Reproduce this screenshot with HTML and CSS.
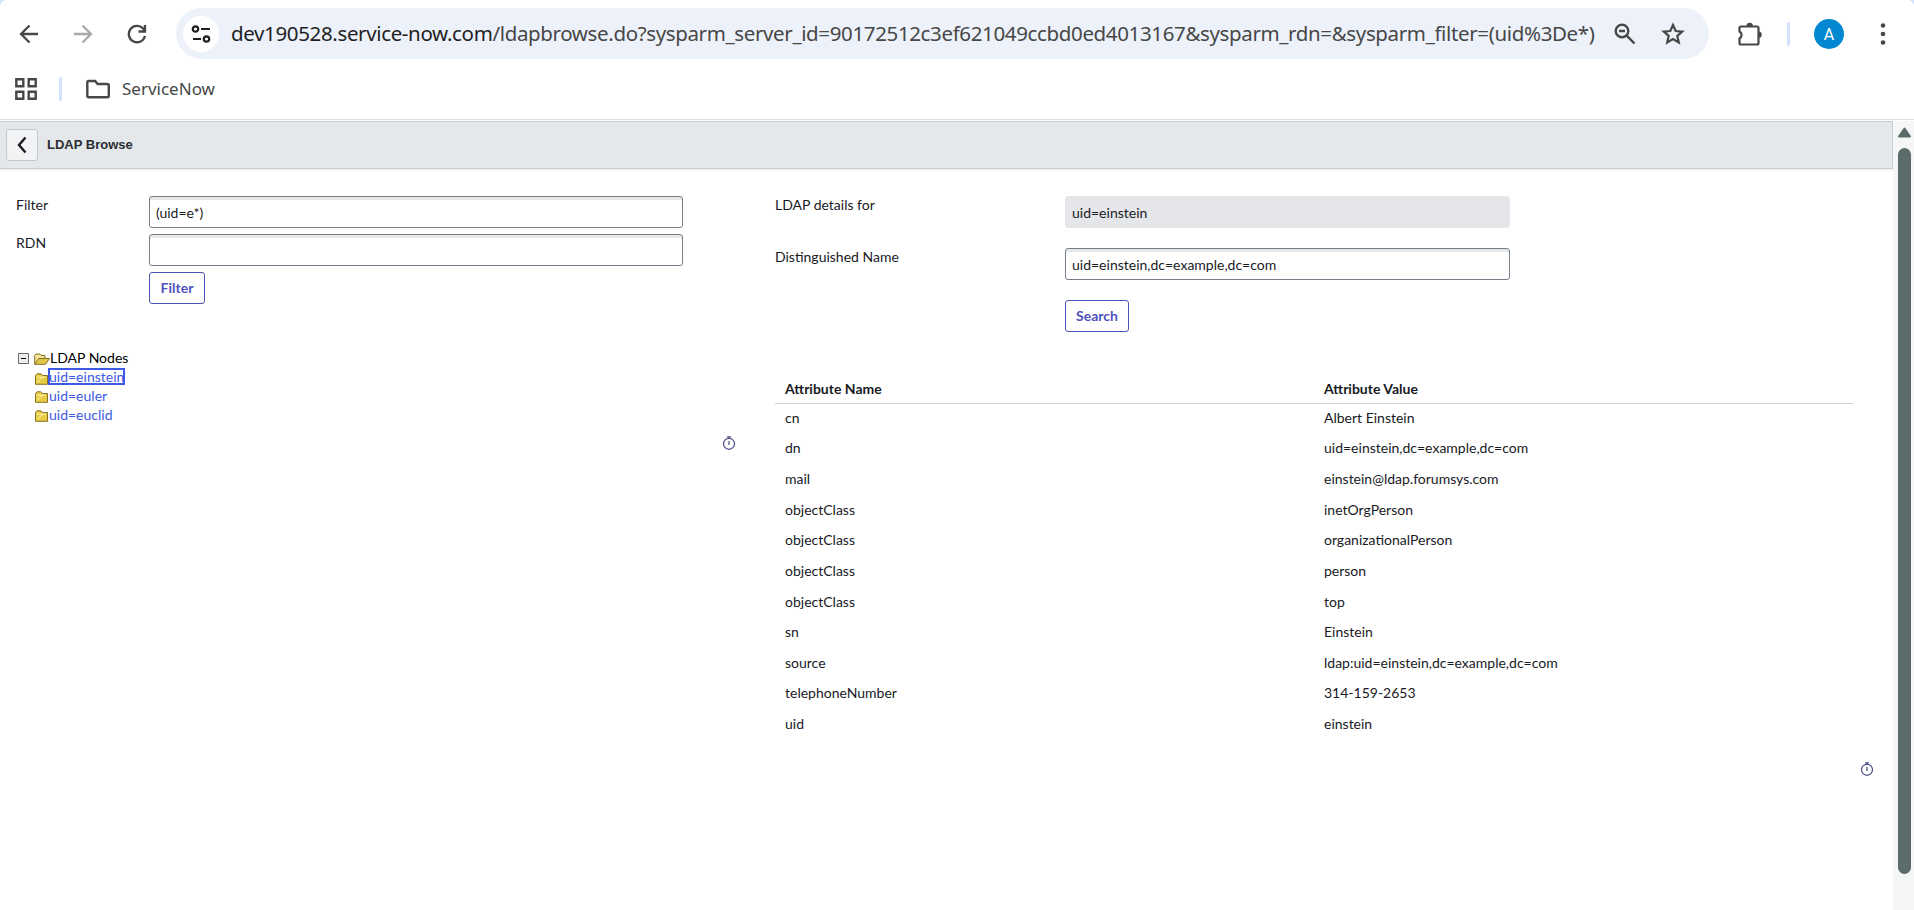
FILE: index.html
```html
<!DOCTYPE html>
<html lang="en">
<head>
<meta charset="utf-8">
<title>LDAP Browse</title>
<link rel="stylesheet" href="styles.css">
</head>
<body>
<div class="browser">
  <div class="toolbar">
    <svg class="nav" width="20" height="20" viewBox="0 0 20 20"><path d="M19 10H2.500M10.500 1.500L2 10l8.500 8.500"/></svg>
    <svg class="nav forward" width="20" height="20" viewBox="0 0 20 20"><path d="M1 10h16.500M9.500 1.500L18 10l-8.500 8.500"/></svg>
    <svg class="nav" width="20" height="20" viewBox="0 0 20 20"><path d="M18 12A8.200 8.200 0 1 1 16 4.400L18 6.500M18 1v6.500h-6.500"/></svg>
    <div class="address">
      <div class="site">
        <svg width="20" height="18" viewBox="0 0 20 18"><circle cx="4.500" cy="4" r="2.700"/><circle cx="15.500" cy="14" r="2.700"/><path d="M10 4h9M2 14h8"/></svg>
      </div>
      <div class="url"><span class="host">dev190528.service-now.com</span>/ldapbrowse.do?sysparm_server_id=90172512c3ef621049ccbd0ed4013167&amp;sysparm_rdn=&amp;sysparm_filter=(uid%3De*)</div>
      <svg class="zoom" width="22" height="22" viewBox="0 0 22 22"><circle cx="8" cy="8" r="6.300"/><path d="M12.700 12.700L20.500 20.500M5 8h6"/></svg>
      <svg class="star" width="24" height="24" viewBox="0 0 24 24"><path d="M12 3l2.700 6 6.500.6-4.900 4.400 1.500 6.500L12 17.100 6.200 20.500 7.700 14 2.800 9.600 9.300 9z"/></svg>
    </div>
    <svg class="puzzle" width="26" height="26" viewBox="0 0 26 26"><path d="M4 5.500H20q1.500 0 1.500 1.500V22q0 1.500-1.500 1.500H4q-1.500 0-1.500-1.500V17.500a4 4 0 0 0 0-7V7q0-1.500 1.500-1.500z"/><path class="solid" d="M9.500 5a3.200 3.200 0 0 1 6.400 0zM21.500 10.500a3.200 3.200 0 0 1 0 6.400z"/></svg>
    <div class="bar"></div>
    <div class="avatar">A</div>
    <svg class="dots" width="6" height="24" viewBox="0 0 6 24"><circle cx="3" cy="3.500" r="2.300"/><circle cx="3" cy="12" r="2.300"/><circle cx="3" cy="20.500" r="2.300"/></svg>
  </div>
  <div class="bookmarks">
    <svg width="22" height="22" viewBox="0 0 22 22"><path d="M1.300 1.300h7v7h-7zM13.700 1.300h7v7h-7zM1.300 13.700h7v7h-7zM13.700 13.700h7v7h-7z"/></svg>
    <div class="bar"></div>
    <svg class="folder" width="24" height="20" viewBox="0 0 24 20"><path d="M2.800 2h6.400l2.400 3h9.600Q22.800 5 22.800 6.500v10.300q0 1.500-1.500 1.500H2.800q-1.500 0-1.500-1.500V3.500Q1.300 2 2.800 2z"/></svg>
    <span>ServiceNow</span>
  </div>
</div>
<div class="viewport">
  <main>
    <header>
      <button class="back"><svg width="12" height="18" viewBox="0 0 12 18"><path d="M9.500 1.500L3 9l6.500 7.500"/></svg></button>
      <h1>LDAP Browse</h1>
    </header>
    <div class="columns">
      <section class="left">
        <div class="form">
          <label>Filter</label><div class="field">(uid=e*)</div>
          <label>RDN</label><div class="field"></div>
          <span></span><button class="action filter">Filter</button>
        </div>
        <div class="tree">
          <div class="node root">
            <svg class="toggle" width="11" height="11" viewBox="0 0 11 11"><path d="M.5.500h10v10H.5z"/><path class="minus" d="M3 5.500h5"/></svg>
            <svg class="open" width="16" height="12" viewBox="0 0 16 12"><path d="M.7 11V2.500L2 1h4l1.200 1.500H11V5" fill="#f5e69c"/><path d="M.7 11.300L4.500 5.500h11L11.500 11.300z" fill="#e2c64b"/></svg>
            <span>LDAP Nodes</span>
          </div>
          <div class="node"><svg class="closed" width="13" height="12" viewBox="0 0 13 12"><path d="M.5 11.300V2.500L2 .8h4L7.500 2.500h5v8.800z" fill="#e8cb45"/><path class="shine" d="M2 9.500L8 4M1.500 4.200h9"/></svg><a class="focus">uid=einstein</a></div>
          <div class="node"><svg class="closed" width="13" height="12" viewBox="0 0 13 12"><path d="M.5 11.300V2.500L2 .8h4L7.500 2.500h5v8.800z" fill="#e8cb45"/><path class="shine" d="M2 9.500L8 4M1.500 4.200h9"/></svg><a>uid=euler</a></div>
          <div class="node"><svg class="closed" width="13" height="12" viewBox="0 0 13 12"><path d="M.5 11.300V2.500L2 .8h4L7.500 2.500h5v8.800z" fill="#e8cb45"/><path class="shine" d="M2 9.500L8 4M1.500 4.200h9"/></svg><a>uid=euclid</a></div>
        </div>
        <svg class="timer" width="14" height="14" viewBox="0 0 14 14"><circle cx="7" cy="7.800" r="5.500"/><path d="M5 .8h4M7 .8v1.500M7 5v4"/></svg>
      </section>
      <section class="right">
        <div class="form details">
          <label>LDAP details for</label><div class="field readonly">uid=einstein</div>
          <label>Distinguished Name</label><div class="field">uid=einstein,dc=example,dc=com</div>
          <span></span><button class="action">Search</button>
        </div>
        <table>
          <thead><tr><th>Attribute Name</th><th>Attribute Value</th></tr></thead>
          <tbody>
            <tr><td>cn</td><td>Albert Einstein</td></tr>
            <tr><td>dn</td><td>uid=einstein,dc=example,dc=com</td></tr>
            <tr><td>mail</td><td>einstein@ldap.forumsys.com</td></tr>
            <tr><td>objectClass</td><td>inetOrgPerson</td></tr>
            <tr><td>objectClass</td><td>organizationalPerson</td></tr>
            <tr><td>objectClass</td><td>person</td></tr>
            <tr><td>objectClass</td><td>top</td></tr>
            <tr><td>sn</td><td>Einstein</td></tr>
            <tr><td>source</td><td>ldap:uid=einstein,dc=example,dc=com</td></tr>
            <tr><td>telephoneNumber</td><td>314-159-2653</td></tr>
            <tr><td>uid</td><td>einstein</td></tr>
          </tbody>
        </table>
        <svg class="timer" width="14" height="14" viewBox="0 0 14 14"><circle cx="7" cy="7.800" r="5.500"/><path d="M5 .8h4M7 .8v1.500M7 5v4"/></svg>
      </section>
    </div>
  </main>
  <div class="scrollbar">
    <svg width="15" height="11" viewBox="0 0 15 11"><path d="M7.500 1.500L13 9.500H2z"/></svg>
    <div class="thumb"></div>
  </div>
</div>
</body>
</html>
```
FILE: styles.css
```css
* { box-sizing: border-box; }
body {
  margin: 0;
  height: 910px;
  overflow: hidden;
  display: flex;
  flex-direction: column;
  background: #fff;
  color: #181a1f;
  font: 14px/20px Lato, sans-serif;
}
svg { display: block; flex: none; fill: none; stroke: #474747; }
button { font: inherit; padding: 0; }

/* Browser chrome */
.browser {
  flex: none;
  height: 121px;
  padding-top: 8px;
  background:
    radial-gradient(circle at 6px 6px, transparent 5.500px, #d3e3fd 6px) 0 0 / 6px 6px no-repeat,
    radial-gradient(circle at 0 6px, transparent 5.500px, #d3e3fd 6px) 100% 0 / 6px 6px no-repeat,
    linear-gradient(#dedfdf, #dedfdf) 0 119px / 100% 1px no-repeat;
  font-family: "Noto Sans", sans-serif;
}
.toolbar { display: flex; align-items: center; height: 51px; padding-left: 19px; }
.nav { margin-right: 34px; stroke-width: 2.300; }
.forward { stroke: #a9a9a9; }
.address {
  flex: none;
  display: flex;
  align-items: center;
  width: 1533px;
  height: 51px;
  margin-left: -5px;
  padding-left: 7px;
  border-radius: 26px;
  background: #ecf1fa;
}
.site {
  flex: none;
  display: flex;
  align-items: center;
  justify-content: center;
  width: 36px;
  height: 36px;
  border-radius: 50%;
  background: #fff;
}
.site svg { stroke: #1f1f1f; stroke-width: 2.200; }
.url {
  width: 1364px;
  margin: 0 0 2px 12px;
  color: #474747;
  font-size: 20.500px;
  line-height: 28px;
  letter-spacing: -0.360px;
  white-space: nowrap;
}
.host { color: #1f1f1f; }
.zoom { margin-left: 19px; stroke-width: 2.400; }
.star { margin-left: 25px; stroke-width: 2.200; }
.puzzle { margin-left: 28px; stroke-width: 2.200; }
.solid { fill: #474747; stroke: none; }
.bar { flex: none; width: 3px; height: 24px; border-radius: 2px; background: #d3e3fd; }
.toolbar .bar { margin-left: 24px; }
.avatar {
  flex: none;
  width: 30px;
  height: 30px;
  margin-left: 24px;
  border-radius: 50%;
  background: #0288d1;
  color: #fff;
  font: 16px/31px Roboto, sans-serif;
  text-align: center;
}
.dots { margin-left: 36px; fill: #474747; stroke: none; }
.bookmarks {
  display: flex;
  align-items: center;
  height: 60px;
  padding-left: 15px;
  color: #474747;
  font-size: 17px;
}
.bookmarks svg { stroke-width: 2.400; }
.bookmarks .bar { margin-left: 22px; }
.bookmarks .folder { margin-left: 24px; }
.bookmarks span { margin-left: 12px; }

/* Page */
.viewport { flex: 1; display: flex; min-height: 0; }
main { width: 1893px; }
header {
  display: flex;
  align-items: center;
  height: 48px;
  padding-left: 6px;
  border: solid #c9cdd1;
  border-width: 1px 1px 1px 0;
  background: #e4e8eb;
  box-shadow: 0 1px 2px #00000018;
}
.back {
  display: flex;
  align-items: center;
  justify-content: center;
  width: 32px;
  height: 32px;
  border: 1px solid #c6c9cc;
  border-radius: 3px;
  background: #f2f3f5;
}
.back svg { stroke: #181a1f; stroke-width: 2.400; }
h1 { margin: 0 0 0 9px; font: 700 13px/20px "Liberation Sans", sans-serif; color: #2b2d33; }
.columns { display: flex; padding-top: 27px; }
.left { width: 775px; padding-left: 16px; }
.form { display: grid; grid-template-columns: 133px 534px; row-gap: 6px; justify-items: start; }
.form label { line-height: 18px; }
.details { grid-template-columns: 290px 445px; row-gap: 20px; }
.field {
  width: 100%;
  height: 32px;
  padding: 6px 6px 0;
  border: 1px solid #757c8a;
  border-radius: 3px;
  line-height: 19px;
  box-shadow: inset 0 3px 0 #e6e8e8;
}
.readonly { border-color: #e4e6ea; background: #e4e6ea; box-shadow: none; }
.action {
  height: 32px;
  padding: 0 10px;
  border: 1px solid #4f52bd;
  border-radius: 3px;
  background: #fff;
  color: #4f52bd;
  font-weight: 700;
}
.filter { width: 56px; }
.tree { margin: 45px 0 0 2px; }
.node { display: flex; align-items: center; height: 18.600px; padding-left: 17px; }
.root { padding-left: 0; color: #000; }
.toggle { stroke: #666; fill: #eee; }
.toggle .minus { stroke: #000; }
.open { margin: 2px 0 0 5px; stroke: #847122; }
.closed { margin-top: 4px; stroke: #847122; }
.closed .shine { stroke: #fff5ad; }
.node a { margin-left: 1px; line-height: 17px; color: #3d59e6; }
.node .focus { line-height: 15px; outline: 2px solid #3d59e6; outline-offset: -1px; text-decoration: underline; }
.timer { stroke: #494b86; stroke-width: 1.200; }
.left .timer { margin: 13px 0 0 706px; }
.right { width: 1118px; }
table { width: 1078px; margin-top: 45px; border-collapse: collapse; table-layout: fixed; }
th, td { padding: 0 10px 1px; text-align: left; }
th { height: 26px; border-bottom: 1px solid #cfd2d9; }
td { height: 30.640px; }
.right .timer { margin: 22px 0 0 1085px; }
.scrollbar { width: 21px; padding: 6px 0 0 4px; background: #f5f7f7; }
.scrollbar svg { fill: #5b6c6b; stroke: #5b6c6b; stroke-width: 2; stroke-linejoin: round; }
.thumb { width: 13px; height: 726px; margin: 10px 0 0 1px; border-radius: 7px; background: #5b6c6b; }
```
